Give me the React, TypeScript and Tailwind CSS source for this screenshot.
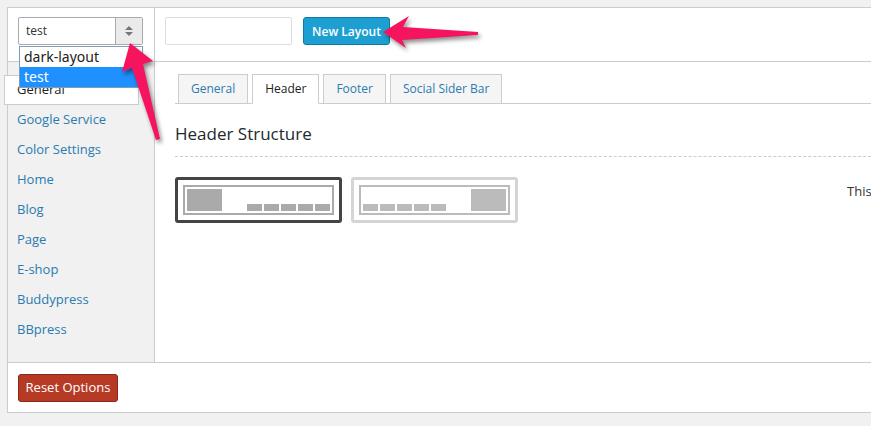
import React from 'react';

const sideItems = ['Google Service', 'Color Settings', 'Home', 'Blog', 'Page', 'E-shop', 'Buddypress', 'BBpress'];
const tabs = ['General', 'Header', 'Footer', 'Social Sider Bar'];

const Blocks = ({ color }: { color: string }) => (
  <div className="flex gap-[2px]">
    {[0, 1, 2, 3, 4].map(i => (
      <div key={i} className={`w-[15px] h-[7px] ${color}`} />
    ))}
  </div>
);

const App = () => {
  return (
    <div className="relative w-[871px] h-[426px] overflow-hidden bg-[#f1f1f1] pt-[7px] pl-[7px] font-['Open_Sans',sans-serif] text-[13px]">
      <div className="w-[900px] border border-[#cccccc] bg-white flex flex-col">
        {/* Top bar */}
        <div className="flex h-[54px] border-b border-[#cccccc]">
          <div className="w-[147px] shrink-0 border-r border-[#cccccc] pl-[10px] pt-[9px]">
            <div className="relative w-[125px]">
              <div className="flex h-[28px] border border-[#aaaaaa] rounded-[2px] bg-white">
                <div className="flex-1 pl-[7px] flex items-center text-[12px] text-[#333]">test</div>
                <div className="w-[27px] border-l border-[#aaaaaa] bg-[#ebebeb] flex flex-col items-center justify-center gap-[2px]">
                  <div className="w-0 h-0 border-l-[4px] border-r-[4px] border-b-[4px] border-l-transparent border-r-transparent border-b-[#777]" />
                  <div className="w-0 h-0 border-l-[4px] border-r-[4px] border-t-[4px] border-l-transparent border-r-transparent border-t-[#777]" />
                </div>
              </div>
              {/* open dropdown */}
              <div className="absolute z-10 left-[1px] top-[29px] w-[124px] border border-[#7f9db9] bg-white text-[14px] leading-[20px] font-['Noto_Sans',sans-serif]">
                <div className="pl-[4px] text-[#222]">dark-layout</div>
                <div className="pl-[4px] bg-[#1e90ff] text-white">test</div>
              </div>
            </div>
          </div>
          <div className="flex-1 flex items-start pl-[10px] pt-[9px] gap-[11px]">
            <input className="w-[127px] h-[28px] border border-[#dddddd] rounded-[2px] outline-none" />
            <button className="w-[87px] h-[28px] pt-[2px] rounded-[3px] bg-[#1e9fd2] border border-[#0b7aa6] text-white text-[12px] font-semibold">
              New Layout
            </button>
          </div>
        </div>

        {/* Middle */}
        <div className="flex h-[300px]">
          <div className="w-[147px] shrink-0 bg-[#f1f1f1] border-r border-[#cccccc] pt-[13px]">
            <div className="-ml-[4px] w-[135px] h-[30px] bg-white border border-[#cccccc] flex items-center pl-[12px] text-[#222]">
              General
            </div>
            {sideItems.map(item => (
              <div key={item} className="h-[30px] flex items-center pl-[9px] text-[#2a7bb0]">
                {item}
              </div>
            ))}
          </div>
          <div className="flex-1 min-w-0 pl-[20px] pt-[12px]">
            <div className="flex items-end gap-[4px] pl-[3px] border-b border-[#cccccc] h-[30px] text-[12px]">
              {tabs.map(t => (
                <div
                  key={t}
                  className={
                    t === 'Header'
                      ? 'h-[30px] -mb-px px-[12px] flex items-center border border-[#cccccc] border-b-white bg-white text-[#222]'
                      : 'h-[29px] px-[12px] flex items-center border border-b-0 border-[#cccccc] bg-[#f5f5f5] text-[#2a7bb0]'
                  }
                >
                  {t}
                </div>
              ))}
            </div>
            <div className="pt-[18px] text-[17px] text-[#23282d] leading-[24px]">Header Structure</div>
            <div className="mt-[10px] border-t border-dashed border-[#cccccc]" />
            <div className="flex items-start mt-[20px]">
              <div className="w-[167px] shrink-0 h-[46px] border-[3px] border-[#444444] rounded-[3px] p-[5px]">
                <div className="h-full border-2 border-[#aaaaaa] flex justify-between items-end p-[2px]">
                  <div className="w-[35px] h-[22px] bg-[#aaaaaa]" />
                  <Blocks color="bg-[#aaaaaa]" />
                </div>
              </div>
              <div className="ml-[9px] shrink-0 w-[167px] h-[46px] border-[3px] border-[#d5d5d5] rounded-[3px] p-[5px]">
                <div className="h-full border-2 border-[#bbbbbb] flex justify-between items-end p-[2px]">
                  <Blocks color="bg-[#bbbbbb]" />
                  <div className="w-[35px] h-[22px] bg-[#bbbbbb]" />
                </div>
              </div>
              <div className="ml-[329px] shrink-0 mt-[5px] whitespace-nowrap text-[#333]">This option allows you to choose a header structure</div>
            </div>
          </div>
        </div>

        {/* Footer */}
        <div className="border-t border-[#cccccc] pt-[11px] pb-[10px] pl-[10px]">
          <button className="w-[100px] h-[28px] rounded-[3px] bg-[#b73a25] border border-[#8a2817] text-white text-[13px]">
            Reset Options
          </button>
        </div>
      </div>

      {/* annotation arrows */}
      <svg className="absolute inset-0 z-20 pointer-events-none drop-shadow-[2px_3px_2px_rgba(0,0,0,0.45)]" width="871" height="426">
        <polygon
          points="383,32 409,16 403,27 478,32 478,35 402,40 406,48"
          fill="#f7145f"
        />
        <polygon
          points="130,43 153,61 143,64 160,139 156,140 132,68 122,72"
          fill="#f7145f"
        />
      </svg>
    </div>
  );
};

export default App;
